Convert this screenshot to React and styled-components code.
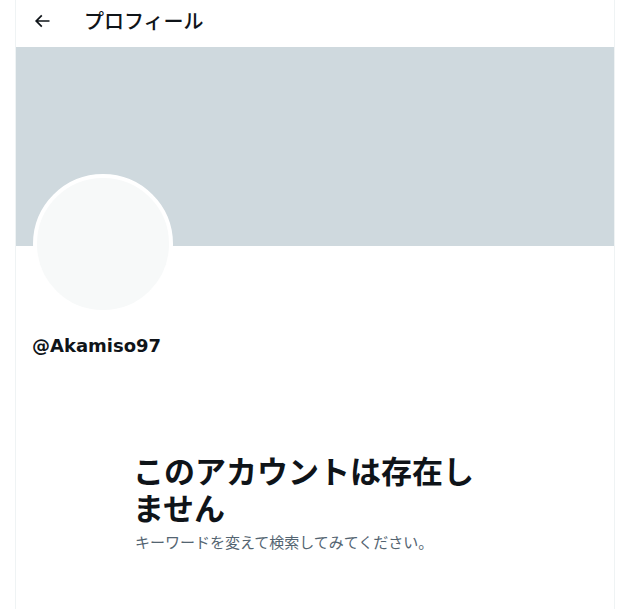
import styled, { createGlobalStyle } from "styled-components";

const GlobalStyle = createGlobalStyle`
  html, body {
    margin: 0;
    padding: 0;
    background: #ffffff;
  }
  body {
    font-family: "Noto Sans CJK JP", "Noto Sans", sans-serif;
    color: #0f1419;
  }
`;

const Page = styled.div`
  display: flex;
  padding-left: 15px;
  min-height: 609px;
`;

const Column = styled.main`
  width: 598px;
  min-height: 609px;
  border-left: 1px solid #eff3f4;
  border-right: 1px solid #eff3f4;
  display: flex;
  flex-direction: column;
`;

const Header = styled.header`
  height: 47px;
  display: flex;
  align-items: center;
  padding: 0 8px;
  gap: 24px;
`;

const BackButton = styled.button`
  width: 36px;
  height: 36px;
  border: none;
  background: transparent;
  display: flex;
  align-items: center;
  justify-content: center;
  padding: 0;
  margin-top: -5px;
  color: #0f1419;
`;

const Title = styled.h2`
  margin: 0;
  margin-top: -6px;
  font-size: 20px;
  font-weight: 500;
  line-height: 24px;
`;

const Banner = styled.div`
  height: 199px;
  background: #cfd9de;
`;

const ProfileInfo = styled.div`
  padding: 0 17px;
  display: flex;
  flex-direction: column;
`;

const Avatar = styled.div`
  width: 132px;
  height: 132px;
  margin-top: -72px;
  border: 4px solid #ffffff;
  border-radius: 50%;
  background: #f7f9f9;
`;

const Handle = styled.div`
  margin-top: 20px;
  margin-left: -1px;
  font-family: "DejaVu Sans", "Noto Sans", sans-serif;
  font-size: 18px;
  font-weight: 700;
  line-height: 24px;
`;

const Empty = styled.section`
  width: 360px;
  margin: 93px auto 0;
  display: flex;
  flex-direction: column;
`;

const EmptyTitle = styled.h1`
  margin: 0;
  font-size: 31px;
  font-weight: 700;
  line-height: 37px;
  margin-left: -2px;
`;

const EmptyText = styled.p`
  margin: 7px 0 0;
  font-size: 15px;
  line-height: 20px;
  color: #536471;
`;

function ArrowLeft() {
  return (
    <svg width="20" height="20" viewBox="0 0 24 24" fill="currentColor">
      <path d="M7.414 13l5.043 5.04-1.414 1.42L3.586 12l7.457-7.46 1.414 1.42L7.414 11H21v2H7.414z" />
    </svg>
  );
}

export default function App() {
  return (
    <>
      <GlobalStyle />
      <Page>
        <Column>
          <Header>
            <BackButton aria-label="戻る">
              <ArrowLeft />
            </BackButton>
            <Title>プロフィール</Title>
          </Header>
          <Banner />
          <ProfileInfo>
            <Avatar />
            <Handle>@Akamiso97</Handle>
          </ProfileInfo>
          <Empty>
            <EmptyTitle>このアカウントは存在しません</EmptyTitle>
            <EmptyText>キーワードを変えて検索してみてください。</EmptyText>
          </Empty>
        </Column>
      </Page>
    </>
  );
}
